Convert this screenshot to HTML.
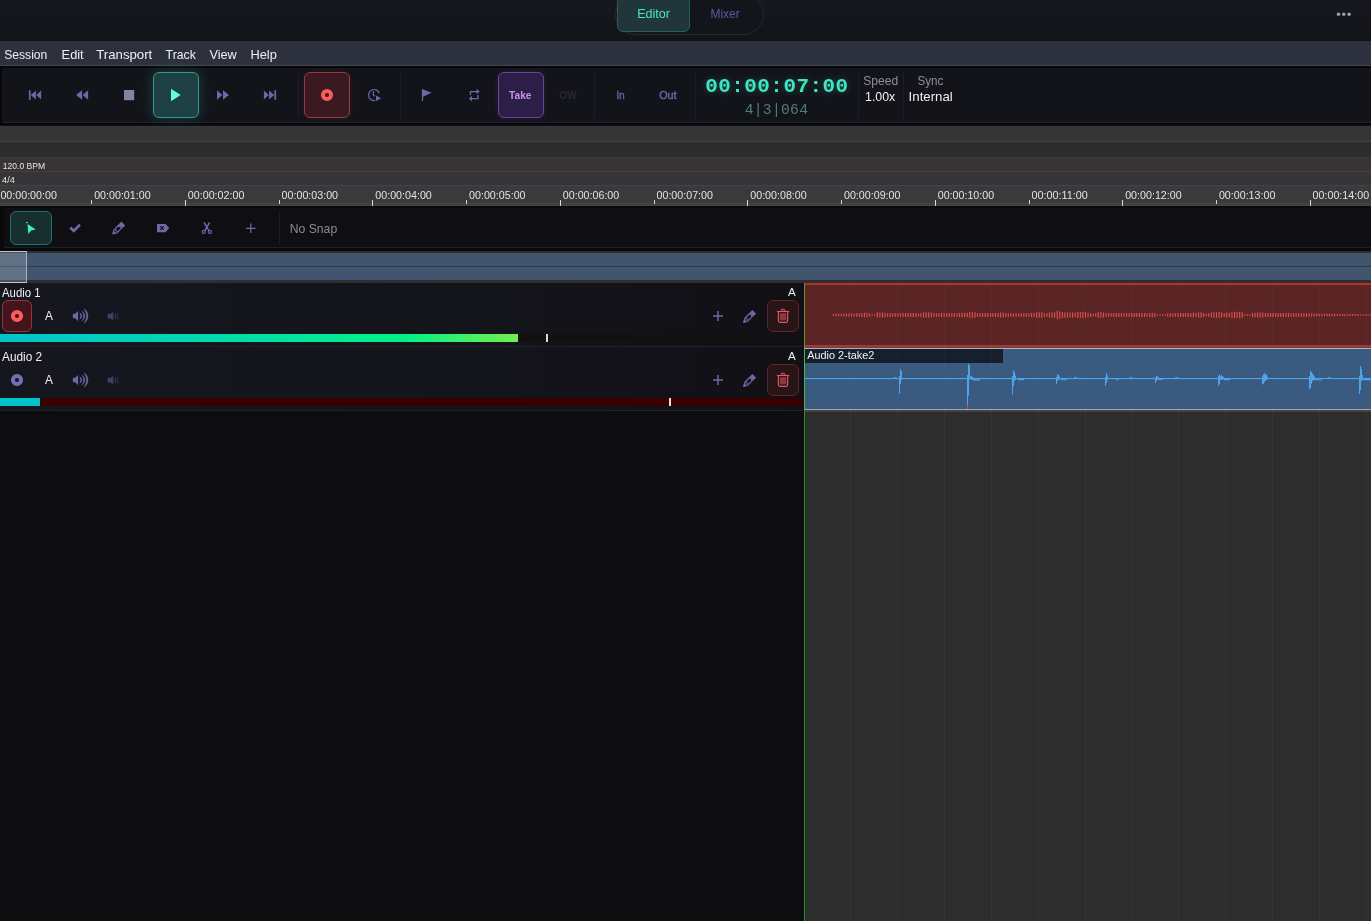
<!DOCTYPE html>
<html><head><meta charset="utf-8">
<style>
*{box-sizing:border-box;margin:0;padding:0}
html,body{width:1371px;height:921px;overflow:hidden;background:#0d0d0f;font-family:"Liberation Sans",sans-serif;}
#root{position:absolute;left:0;top:0;width:1371px;height:921px;will-change:transform;opacity:.999}
.a{position:absolute}
.tb{position:absolute;top:72px;width:46px;height:46px;border-radius:6px}
.sep{position:absolute;top:72px;width:1px;height:46px;background:#1d1e29}
svg{position:absolute;left:0;top:0;overflow:visible}
text{white-space:pre}
</style></head><body><div id="root">

<div class="a" style="left:0px;top:0px;width:1371px;height:41px;background:linear-gradient(#181920,#14151a);"></div>
<div class="a" style="left:615px;top:-6px;width:149px;height:41px;background:#15161b;border-radius:21px;border:1px solid #292a32"></div>
<div class="a" style="left:617px;top:-4px;width:73px;height:36px;background:#22373b;border-radius:6px;border:1px solid #24615c"></div>
<div class="a" style="left:0px;top:40px;width:1371px;height:1px;background:#111217;"></div>
<div class="a" style="left:0px;top:41px;width:1371px;height:24px;background:#2e323e;"></div>
<div class="a" style="left:0px;top:65px;width:1371px;height:1px;background:#464a57;"></div>
<div class="a" style="left:0px;top:66px;width:1371px;height:59px;background:#08080a;"></div>
<div class="a" style="left:2px;top:68px;width:1369px;height:55px;background:#14151b;border-bottom:1px solid #232433"></div>
<div class="tb" style="left:153px;background:#1f4044;border:1px solid #2a9d8c;box-shadow:0 0 14px rgba(60,220,190,.22)"></div>
<div class="tb" style="left:304px;background:#3b1b22;border:1px solid #9a3b42;box-shadow:0 0 6px rgba(200,60,60,.12)"></div>
<div class="tb" style="left:498px;background:#2c2048;border:1px solid #6d469c;box-shadow:0 0 6px rgba(140,90,220,.15)"></div>
<div class="sep" style="left:298px"></div>
<div class="sep" style="left:400px"></div>
<div class="sep" style="left:594px"></div>
<div class="sep" style="left:695px"></div>
<div class="sep" style="left:858px"></div>
<div class="sep" style="left:903px"></div>
<div class="a" style="left:0px;top:125px;width:1371px;height:1px;background:#121220;"></div>
<div class="a" style="left:0px;top:126px;width:1371px;height:15px;background:#363636;"></div>
<div class="a" style="left:0px;top:141px;width:1371px;height:1px;background:#414141;"></div>
<div class="a" style="left:0px;top:142px;width:1371px;height:15px;background:#2d2d2d;"></div>
<div class="a" style="left:0px;top:157px;width:1371px;height:1px;background:#3f3f3f;"></div>
<div class="a" style="left:0px;top:158px;width:1371px;height:13px;background:#393534;"></div>
<div class="a" style="left:0px;top:171px;width:1371px;height:1px;background:#434240;"></div>
<div class="a" style="left:0px;top:172px;width:1371px;height:13px;background:#35353a;"></div>
<div class="a" style="left:0px;top:185px;width:1371px;height:1px;background:#444446;"></div>
<div class="a" style="left:0px;top:186px;width:1371px;height:17px;background:#3b3b3b;"></div>
<div class="a" style="left:0px;top:203px;width:1371px;height:3px;background:#434343;"></div>
<div class="a" style="left:-2px;top:200px;width:1px;height:6px;background:#dcdcdc;"></div>
<div class="a" style="left:91px;top:200px;width:1px;height:4px;background:#d4d4d4;"></div>
<div class="a" style="left:185px;top:200px;width:1px;height:6px;background:#dcdcdc;"></div>
<div class="a" style="left:279px;top:200px;width:1px;height:4px;background:#d4d4d4;"></div>
<div class="a" style="left:372px;top:200px;width:1px;height:6px;background:#dcdcdc;"></div>
<div class="a" style="left:466px;top:200px;width:1px;height:4px;background:#d4d4d4;"></div>
<div class="a" style="left:560px;top:200px;width:1px;height:6px;background:#dcdcdc;"></div>
<div class="a" style="left:654px;top:200px;width:1px;height:4px;background:#d4d4d4;"></div>
<div class="a" style="left:747px;top:200px;width:1px;height:6px;background:#dcdcdc;"></div>
<div class="a" style="left:841px;top:200px;width:1px;height:4px;background:#d4d4d4;"></div>
<div class="a" style="left:935px;top:200px;width:1px;height:6px;background:#dcdcdc;"></div>
<div class="a" style="left:1029px;top:200px;width:1px;height:4px;background:#d4d4d4;"></div>
<div class="a" style="left:1122px;top:200px;width:1px;height:6px;background:#dcdcdc;"></div>
<div class="a" style="left:1216px;top:200px;width:1px;height:4px;background:#d4d4d4;"></div>
<div class="a" style="left:1310px;top:200px;width:1px;height:6px;background:#dcdcdc;"></div>
<div class="a" style="left:0px;top:206px;width:1371px;height:45px;background:#0b0b0d;"></div>
<div class="a" style="left:4px;top:208px;width:1367px;height:40px;background:#101014;border-bottom:1px solid #1e1e2e"></div>
<div class="a" style="left:10px;top:211px;width:42px;height:34px;background:#18302f;border-radius:6px;border:1px solid #1f7569"></div>
<div class="a" style="left:279px;top:211px;width:1px;height:34px;background:#1b1b25;"></div>
<div class="a" style="left:0px;top:251px;width:1371px;height:32px;background:#303030;"></div>
<div class="a" style="left:0px;top:253px;width:1371px;height:27px;background:#42576f;"></div>
<div class="a" style="left:0px;top:266px;width:1371px;height:1px;background:#353a3e;"></div>
<div class="a" style="left:-1px;top:251px;width:28px;height:32px;background:rgba(255,255,255,.17);border:1px solid #c6c6c6;border-right-color:rgba(200,212,224,.65)"></div>
<div class="a" style="left:0px;top:283px;width:804px;height:128px;background:linear-gradient(90deg,#171720,#15151c 60%,#111116);"></div>
<div class="a" style="left:0px;top:346px;width:804px;height:1px;background:#22222c;"></div>
<div class="a" style="left:0px;top:410px;width:804px;height:1px;background:#22222c;"></div>
<div class="a" style="left:2px;top:300px;width:30px;height:32px;background:#43161d;border-radius:6px;border:1px solid #98343b"></div>
<div class="a" style="left:767px;top:300px;width:32px;height:32px;background:#2a1519;border-radius:6px;border:1px solid #56272d"></div>
<div class="a" style="left:767px;top:364px;width:32px;height:32px;background:#2a1519;border-radius:6px;border:1px solid #56272d"></div>
<div class="a" style="left:0px;top:334px;width:804px;height:8px;background:#121213;"></div>
<div class="a" style="left:0px;top:334px;width:518px;height:8px;background:linear-gradient(90deg,#00c4cc 0,#00d4b8 30%,#00e89c 60%,#00f288 78%,#52f060 93%,#74ee4c 100%);"></div>
<div class="a" style="left:546px;top:334px;width:2px;height:8px;background:#d8d8d8;"></div>
<div class="a" style="left:0px;top:398px;width:804px;height:8px;background:#390001;"></div>
<div class="a" style="left:0px;top:398px;width:40px;height:8px;background:#00c4cc;"></div>
<div class="a" style="left:669px;top:398px;width:2px;height:8px;background:#e8dede;"></div>
<div class="a" style="left:804px;top:283px;width:567px;height:638px;background:#2e2e2e;"></div>
<div class="a" style="left:805px;top:283px;width:566px;height:64px;background:#5c2626;border-top:2px solid #b53232;border-bottom:2px solid #b53232"></div>
<div class="a" style="left:805px;top:347px;width:566px;height:65px;background:#3b5b80;border-top:1px solid #4e4e4e;border-bottom:2px solid #444"></div>
<div class="a" style="left:805px;top:348px;width:566px;height:1px;background:#b2b2b2;"></div>
<div class="a" style="left:805px;top:409px;width:566px;height:1px;background:#a8a8a8;"></div>
<div class="a" style="left:805px;top:349px;width:198px;height:14px;background:#17212e;"></div>
<div class="a" style="left:850px;top:283px;width:1px;height:128px;background:rgba(255,255,255,.024);"></div>
<div class="a" style="left:850px;top:411px;width:1px;height:510px;background:rgba(255,255,255,.038);"></div>
<div class="a" style="left:897px;top:283px;width:1px;height:128px;background:rgba(255,255,255,.024);"></div>
<div class="a" style="left:897px;top:411px;width:1px;height:510px;background:rgba(255,255,255,.038);"></div>
<div class="a" style="left:944px;top:283px;width:1px;height:128px;background:rgba(255,255,255,.024);"></div>
<div class="a" style="left:944px;top:411px;width:1px;height:510px;background:rgba(255,255,255,.038);"></div>
<div class="a" style="left:991px;top:283px;width:1px;height:128px;background:rgba(255,255,255,.024);"></div>
<div class="a" style="left:991px;top:411px;width:1px;height:510px;background:rgba(255,255,255,.038);"></div>
<div class="a" style="left:1038px;top:283px;width:1px;height:128px;background:rgba(255,255,255,.024);"></div>
<div class="a" style="left:1038px;top:411px;width:1px;height:510px;background:rgba(255,255,255,.038);"></div>
<div class="a" style="left:1085px;top:283px;width:1px;height:128px;background:rgba(255,255,255,.024);"></div>
<div class="a" style="left:1085px;top:411px;width:1px;height:510px;background:rgba(255,255,255,.038);"></div>
<div class="a" style="left:1131px;top:283px;width:1px;height:128px;background:rgba(255,255,255,.024);"></div>
<div class="a" style="left:1131px;top:411px;width:1px;height:510px;background:rgba(255,255,255,.038);"></div>
<div class="a" style="left:1178px;top:283px;width:1px;height:128px;background:rgba(255,255,255,.024);"></div>
<div class="a" style="left:1178px;top:411px;width:1px;height:510px;background:rgba(255,255,255,.038);"></div>
<div class="a" style="left:1225px;top:283px;width:1px;height:128px;background:rgba(255,255,255,.024);"></div>
<div class="a" style="left:1225px;top:411px;width:1px;height:510px;background:rgba(255,255,255,.038);"></div>
<div class="a" style="left:1272px;top:283px;width:1px;height:128px;background:rgba(255,255,255,.024);"></div>
<div class="a" style="left:1272px;top:411px;width:1px;height:510px;background:rgba(255,255,255,.038);"></div>
<div class="a" style="left:1319px;top:283px;width:1px;height:128px;background:rgba(255,255,255,.024);"></div>
<div class="a" style="left:1319px;top:411px;width:1px;height:510px;background:rgba(255,255,255,.038);"></div>
<div class="a" style="left:1366px;top:283px;width:1px;height:128px;background:rgba(255,255,255,.024);"></div>
<div class="a" style="left:1366px;top:411px;width:1px;height:510px;background:rgba(255,255,255,.038);"></div>
<svg width="1371" height="921" fill="#6d69aa"><g fill="#9e9db7"><circle cx="1338.5" cy="14.2" r="1.75"/><circle cx="1343.8" cy="14.2" r="1.75"/><circle cx="1349.1" cy="14.2" r="1.75"/></g><rect x="28.9" y="90.2" width="1.7" height="9.6"/><path d="M30.8 95L35.9 90.6V99.4ZM36.2 95L41.1 90.5V99.5Z"/><path d="M76.1 95L82.1 90.2V99.8ZM82.7 95L88.1 90.2V99.8Z"/><rect x="124" y="90" width="10.2" height="10.2" fill="#8583a1"/><path d="M171 88.7L180.7 95L171 101.2Z" fill="#62fbe6"/><path d="M217 90.2V99.8L222.4 95ZM223 90.2V99.8L229 95Z"/><rect x="274.4" y="90.2" width="1.7" height="9.6"/><path d="M274.2 95L269.1 90.6V99.4ZM268.8 95L263.9 90.5V99.5Z"/><circle cx="327" cy="95" r="4.1" fill="none" stroke="#ff5c5c" stroke-width="4"/><path d="M379.3 93.3A5.5 5.5 0 1 0 375.2 100.4" fill="none" stroke="#6d69aa" stroke-width="1.2"/><path d="M373.4 91V95.8H375.2" fill="none" stroke="#6d69aa" stroke-width="1.1"/><path d="M376 95.4L381.2 98.2L376 101Z"/><rect x="421.9" y="89" width="1.2" height="12"/><path d="M422 89L431.5 92.8L422.6 97Z"/><path d="M470.5 95V91.6H477" fill="none" stroke="#6d69aa" stroke-width="1.3"/><path d="M476.6 88.8L479.6 91.6L476.6 94.4Z"/><path d="M478 95V98.6H471.5" fill="none" stroke="#6d69aa" stroke-width="1.3"/><path d="M471.9 95.8L468.9 98.6L471.9 101.4Z"/><path d="M27.5 224L35.8 229.6L31.2 230.4L28.3 234Z" fill="#3df0cc"/><rect x="26" y="222" width="1.6" height="1.2" fill="#3df0cc"/><path d="M70.3 227.5L73.7 230.9L80 224.7" fill="none" stroke="#6d69aa" stroke-width="2.7"/><g transform="translate(112.9,233.9) rotate(-45)"><path d="M0.7 0L3.6 -2.05H10.2V2.05H3.6Z" fill="none" stroke="#6d69aa" stroke-width="1.2" stroke-linejoin="round"/><path d="M0 0L2 -1.3V1.3ZM4.6 -2V2" stroke="#6d69aa" stroke-width="1.1"/><rect x="10.6" y="-2.7" width="4.1" height="5.4"/></g><path d="M157 224H165.6L169.2 228L165.6 232.2H157Z"/><path d="M160.2 226.2L163.8 229.8M163.8 226.2L160.2 229.8" stroke="#0f0f12" stroke-width="1.1"/><g fill="none" stroke="#6d69aa" stroke-width="1.2"><circle cx="203.8" cy="231.9" r="1.55"/><circle cx="209.9" cy="231.9" r="1.55"/><path d="M204.8 230.6L209.7 222.4M208.9 230.6L204 222.4" stroke-width="1.5"/></g><path d="M250.8 223.5V233.1M246 228.3H255.6" stroke="#6d69aa" stroke-width="1.25" fill="none"/><circle cx="17" cy="316" r="4.1" fill="none" stroke="#ff5c5c" stroke-width="4"/><g transform="translate(0,0)"><path d="M72.9 313.7H75.2L78.1 310.9V321.2L75.2 318.2H72.9Z"/><path d="M79.8 312.8A3.5 3.5 0 0 1 79.8 319.2A7.2 7.2 0 0 0 79.8 312.8ZM81.85 310.9A5.9 5.9 0 0 1 81.85 321.2A9.3 9.3 0 0 0 81.85 310.9ZM83.8 308.7A8.2 8.2 0 0 1 83.8 323.1A10.95 10.95 0 0 0 83.8 308.7Z" stroke="#6d69aa" stroke-width=".25"/><path d="M107.7 313.7H110.4L113.3 312V320.2L110.4 318.4H107.7Z" fill="#434062"/><rect x="114.9" y="313.7" width="1.1" height="5.1" fill="#3b395a"/><rect x="117.1" y="312.8" width="1.1" height="7" fill="#2e2d47"/></g><path d="M718 311V321M713 316H723" stroke="#6d69aa" stroke-width="1.5" fill="none"/><g transform="translate(743.8,322.2) rotate(-45)"><path d="M0.7 0L3.6 -2.05H10.2V2.05H3.6Z" fill="none" stroke="#6d69aa" stroke-width="1.2" stroke-linejoin="round"/><path d="M0 0L2 -1.3V1.3ZM4.6 -2V2" stroke="#6d69aa" stroke-width="1.1"/><rect x="10.6" y="-2.7" width="4.1" height="5.4"/></g><g transform="translate(0,0)" fill="none" stroke="#d9605f" stroke-width="1.15"><rect x="781.4" y="309.4" width="3.4" height="2" rx=".6" stroke-width="1"/><path d="M776.9 311.5H789.1"/><path d="M778.4 312V320.5Q778.4 322.4 780.3 322.4H785.8Q787.7 322.4 787.7 320.5V312"/><rect x="779.9" y="313.2" width="6.4" height="7.1" fill="#8a3a40" stroke="none"/></g><circle cx="17" cy="380" r="4.1" fill="none" stroke="#7572b4" stroke-width="4"/><g transform="translate(0,64)"><path d="M72.9 313.7H75.2L78.1 310.9V321.2L75.2 318.2H72.9Z"/><path d="M79.8 312.8A3.5 3.5 0 0 1 79.8 319.2A7.2 7.2 0 0 0 79.8 312.8ZM81.85 310.9A5.9 5.9 0 0 1 81.85 321.2A9.3 9.3 0 0 0 81.85 310.9ZM83.8 308.7A8.2 8.2 0 0 1 83.8 323.1A10.95 10.95 0 0 0 83.8 308.7Z" stroke="#6d69aa" stroke-width=".25"/><path d="M107.7 313.7H110.4L113.3 312V320.2L110.4 318.4H107.7Z" fill="#434062"/><rect x="114.9" y="313.7" width="1.1" height="5.1" fill="#3b395a"/><rect x="117.1" y="312.8" width="1.1" height="7" fill="#2e2d47"/></g><path d="M718 375V385M713 380H723" stroke="#6d69aa" stroke-width="1.5" fill="none"/><g transform="translate(743.8,386.2) rotate(-45)"><path d="M0.7 0L3.6 -2.05H10.2V2.05H3.6Z" fill="none" stroke="#6d69aa" stroke-width="1.2" stroke-linejoin="round"/><path d="M0 0L2 -1.3V1.3ZM4.6 -2V2" stroke="#6d69aa" stroke-width="1.1"/><rect x="10.6" y="-2.7" width="4.1" height="5.4"/></g><g transform="translate(0,64)" fill="none" stroke="#d9605f" stroke-width="1.15"><rect x="781.4" y="309.4" width="3.4" height="2" rx=".6" stroke-width="1"/><path d="M776.9 311.5H789.1"/><path d="M778.4 312V320.5Q778.4 322.4 780.3 322.4H785.8Q787.7 322.4 787.7 320.5V312"/><rect x="779.9" y="313.2" width="6.4" height="7.1" fill="#8a3a40" stroke="none"/></g></svg><svg width="1371" height="921"><path d="M807.9 314.6v.8M810.5 314.6v.8M813.0 314.6v.8M815.6 314.6v.8M818.2 314.6v.8M820.8 314.6v.8M823.3 314.6v.8M825.9 314.6v.8M828.5 314.6v.8M831.0 314.6v.8" stroke="#c04a4a" stroke-opacity=".22" stroke-width="1.1" fill="none"/><path d="M833.60 314.03v1.94M836.17 313.82v2.37M838.74 313.67v2.66M841.31 313.75v2.51M843.88 313.60v2.80M846.45 313.59v2.81M849.02 313.62v2.76M851.59 313.43v3.13M854.16 313.46v3.09M856.73 313.25v3.50M859.30 313.26v3.49M861.87 313.11v3.78M864.44 312.83v4.34M867.01 312.77v4.45M869.58 313.61v2.77M872.15 314.24v1.53M874.72 314.18v1.63M877.29 312.32v5.36M879.86 312.47v5.06M882.43 312.54v4.92M885.00 312.69v4.63M887.57 313.33v3.34M890.14 313.10v3.81M892.71 313.26v3.48M895.28 313.30v3.40M897.85 313.31v3.38M900.42 313.23v3.54M902.99 312.92v4.16M905.56 313.01v3.97M908.13 312.90v4.19M910.70 312.91v4.18M913.27 313.02v3.95M915.84 313.07v3.86M918.41 313.42v3.16M920.98 312.96v4.07M923.55 312.43v5.15M926.12 312.22v5.56M928.69 312.33v5.34M931.26 312.49v5.01M933.83 313.18v3.65M936.40 313.21v3.57M938.97 313.26v3.48M941.54 313.12v3.77M944.11 313.14v3.71M946.68 313.27v3.45M949.25 313.18v3.64M951.82 313.19v3.61M954.39 313.09v3.82M956.96 313.13v3.73M959.53 313.11v3.77M962.10 312.63v4.74M964.67 312.93v4.13M967.24 312.65v4.71M969.81 312.11v5.77M972.38 312.36v5.29M974.95 312.20v5.59M977.52 313.24v3.52M980.09 313.05v3.90M982.66 313.02v3.96M985.23 313.08v3.84M987.80 312.99v4.03M990.37 313.16v3.69M992.94 313.04v3.92M995.51 313.07v3.86M998.08 313.05v3.90M1000.65 312.52v4.96M1003.22 312.45v5.11M1005.79 313.09v3.82M1008.36 313.27v3.45M1010.93 313.27v3.45M1013.50 313.48v3.03M1016.07 313.37v3.26M1018.64 313.44v3.13M1021.21 313.33v3.34M1023.78 313.27v3.46M1026.35 313.32v3.37M1028.92 313.19v3.62M1031.49 313.01v3.99M1034.06 312.96v4.09M1036.63 312.29v5.42M1039.20 312.35v5.30M1041.77 312.37v5.26M1044.34 313.31v3.38M1046.91 313.16v3.69M1049.48 312.47v5.06M1052.05 312.32v5.36M1054.62 312.16v5.67M1057.19 310.76v8.48M1059.76 311.27v7.46M1062.33 312.03v5.93M1064.90 312.34v5.32M1067.47 312.29v5.41M1070.04 312.41v5.18M1072.61 312.48v5.04M1075.18 312.72v4.56M1077.75 312.04v5.92M1080.32 312.07v5.86M1082.89 311.82v6.37M1085.46 311.90v6.19M1088.03 312.70v4.59M1090.60 313.24v3.53M1093.17 313.85v2.30M1095.74 313.32v3.36M1098.31 312.31v5.39M1100.88 312.26v5.48M1103.45 312.40v5.20M1106.02 313.25v3.50M1108.59 313.14v3.73M1111.16 313.16v3.68M1113.73 313.11v3.78M1116.30 313.01v3.98M1118.87 313.10v3.81M1121.44 313.16v3.68M1124.01 313.14v3.72M1126.58 313.13v3.73M1129.15 313.33v3.35M1131.72 313.07v3.87M1134.29 313.07v3.85M1136.86 313.02v3.96M1139.43 313.02v3.97M1142.00 313.11v3.77M1144.57 313.09v3.83M1147.14 313.15v3.69M1149.71 312.96v4.08M1152.28 312.86v4.28M1154.85 312.86v4.28M1157.42 314.33v1.33M1159.99 314.34v1.32M1162.56 314.32v1.36M1165.13 314.29v1.42M1167.70 313.43v3.15M1170.27 313.34v3.31M1172.84 313.32v3.37M1175.41 313.20v3.60M1177.98 313.26v3.48M1180.55 312.96v4.08M1183.12 313.00v4.01M1185.69 313.10v3.81M1188.26 313.01v3.99M1190.83 312.92v4.16M1193.40 312.85v4.29M1195.97 312.88v4.23M1198.54 312.49v5.03M1201.11 312.19v5.61M1203.68 313.05v3.91M1206.25 313.80v2.39M1208.82 313.27v3.47M1211.39 312.38v5.24M1213.96 312.27v5.46M1216.53 312.31v5.39M1219.10 312.05v5.89M1221.67 312.54v4.92M1224.24 312.95v4.10M1226.81 312.58v4.83M1229.38 312.70v4.60M1231.95 312.06v5.89M1234.52 311.74v6.52M1237.09 311.90v6.21M1239.66 311.75v6.50M1242.23 312.06v5.89M1244.80 314.26v1.48M1247.37 314.28v1.44M1249.94 314.33v1.35M1252.51 312.84v4.32M1255.08 312.63v4.73M1257.65 312.39v5.22M1260.22 312.49v5.03M1262.79 312.59v4.81M1265.36 313.06v3.88M1267.93 313.10v3.79M1270.50 312.93v4.15M1273.07 312.88v4.24M1275.64 312.93v4.13M1278.21 312.96v4.08M1280.78 312.97v4.07M1283.35 313.00v4.00M1285.92 313.17v3.66M1288.49 313.09v3.82M1291.06 313.15v3.69M1293.63 313.28v3.45M1296.20 313.30v3.40M1298.77 313.25v3.50M1301.34 313.28v3.44M1303.91 313.18v3.63M1306.48 313.14v3.72M1309.05 313.30v3.39M1311.62 313.44v3.12M1314.19 313.55v2.90M1316.76 313.61v2.78M1319.33 313.75v2.50M1321.90 313.80v2.40M1324.47 313.81v2.37M1327.04 313.84v2.32M1329.61 313.85v2.29M1332.18 313.83v2.34M1334.75 313.85v2.30M1337.32 313.93v2.14M1339.89 314.05v1.90M1342.46 314.04v1.92M1345.03 314.03v1.94M1347.60 314.15v1.71M1350.17 314.08v1.85M1352.74 314.05v1.89M1355.31 314.08v1.83M1357.88 314.10v1.80M1360.45 314.15v1.70M1363.02 314.20v1.59M1365.59 314.14v1.73M1368.16 314.21v1.58M1370.73 314.16v1.68" stroke="#ec5252" stroke-opacity=".92" stroke-width="1.15" fill="none"/><rect x="805" y="378" width="566" height="1.1" fill="#4aa6f0"/><path d="M899.5 376.0V393.7M900.5 369.0V384.0M901.5 371.0V380.0M967.5 375.0V405.4M968.5 363.5V395.6M969.5 365.3V379.5M970.5 376.4V379.3M971.5 375.8V379.3M972.5 377.0V380.0M1012.5 376.0V394.3M1013.5 370.2V386.0M1014.5 372.0V381.0M1015.5 375.5V380.0M1056.5 377.0V384.0M1057.5 374.2V381.0M1058.5 375.0V379.5M1059.5 376.6V379.5M1105.5 377.0V386.0M1106.5 373.2V383.0M1107.5 375.6V380.0M1155.5 377.5V383.0M1156.5 376.0V381.0M1157.5 376.4V379.4M1158.5 377.0V379.4M1218.5 376.0V386.0M1219.5 374.3V384.0M1220.5 376.2V380.0M1221.5 375.0V380.0M1222.5 376.0V379.5M1223.5 377.0V379.6M1262.5 376.5V384.6M1263.5 374.0V384.0M1264.5 372.7V382.0M1265.5 375.0V381.0M1266.5 374.0V380.0M1267.5 376.5V379.6M1309.5 376.0V389.6M1310.5 370.5V388.0M1311.5 372.0V384.0M1312.5 373.5V381.0M1313.5 375.0V380.0M1314.5 376.6V380.0M1359.5 376.0V394.0M1360.5 366.0V390.0M1361.5 369.0V381.0M1362.5 375.0V380.0" stroke="#4aa6f0" stroke-width="1.05" fill="none"/><path d="M973.0 379.9H980.0M1018.0 379.6H1024.0M1061.0 379.7H1067.0M1159.0 379.5H1162.5M1224.0 379.6H1230.0M1315.0 379.8H1322.0M1363.0 379.6H1371.0" stroke="#4aa6f0" stroke-width="1.1" fill="none"/><path d="M1074.3 377.6h2.4M1116.0 379.6h2.4M1129.8 377.7h2.4M1175.3 377.6h2.4M1327.8 377.7h2.4M893.8 377.8h2.4" stroke="#4aa6f0" stroke-width="1" fill="none"/><rect x="967" y="405.2" width="1.1" height="3.8" fill="#f04040"/><path d="M899.0 378.5h3M967.0 378.5h3M1012.5 378.5h3M1056.0 378.5h3M1105.5 378.5h3M1155.0 378.5h3M1218.5 378.5h3M1262.5 378.5h3M1309.5 378.5h3M1359.5 378.5h3" stroke="#a08868" stroke-width=".8" fill="none"/></svg><svg width="1371" height="921"><text x="637.20" y="18.40" font-family="Liberation Sans" font-size="13.48" fill="#4fe6c8" textLength="32.83" lengthAdjust="spacingAndGlyphs">Editor</text><text x="710.40" y="18.40" font-family="Liberation Sans" font-size="13.48" fill="#5b5aa6" textLength="29.39" lengthAdjust="spacingAndGlyphs">Mixer</text><text x="4.20" y="59.00" font-family="Liberation Sans" font-size="13.19" fill="#f0f0f3" textLength="43.17" lengthAdjust="spacingAndGlyphs">Session</text><text x="61.60" y="59.00" font-family="Liberation Sans" font-size="13.19" fill="#f0f0f3" textLength="22.08" lengthAdjust="spacingAndGlyphs">Edit</text><text x="96.30" y="59.00" font-family="Liberation Sans" font-size="13.19" fill="#f0f0f3" textLength="55.93" lengthAdjust="spacingAndGlyphs">Transport</text><text x="165.60" y="59.00" font-family="Liberation Sans" font-size="13.19" fill="#f0f0f3" textLength="30.21" lengthAdjust="spacingAndGlyphs">Track</text><text x="209.40" y="59.00" font-family="Liberation Sans" font-size="13.19" fill="#f0f0f3" textLength="27.39" lengthAdjust="spacingAndGlyphs">View</text><text x="250.50" y="59.00" font-family="Liberation Sans" font-size="13.19" fill="#f0f0f3" textLength="26.32" lengthAdjust="spacingAndGlyphs">Help</text><text x="509.10" y="98.95" font-family="Liberation Sans" font-size="10.29" font-weight="bold" fill="#cb92ea" textLength="22.30" lengthAdjust="spacingAndGlyphs">Take</text><text x="559.20" y="98.95" font-family="Liberation Sans" font-size="10.29" font-weight="bold" fill="#292836" textLength="17.47" lengthAdjust="spacingAndGlyphs">OW</text><text x="616.60" y="98.95" font-family="Liberation Sans" font-size="10.29" fill="#6d69aa" textLength="8.09" lengthAdjust="spacingAndGlyphs" stroke="#6d69aa" stroke-width=".35">In</text><text x="659.20" y="98.95" font-family="Liberation Sans" font-size="10.29" fill="#6d69aa" textLength="17.42" lengthAdjust="spacingAndGlyphs" stroke="#6d69aa" stroke-width=".35">Out</text><text x="705.25" y="92.10" font-family="Liberation Mono" font-size="20.91" font-weight="bold" fill="#3fe8c5" textLength="142.77" lengthAdjust="spacing" style="filter:drop-shadow(0 0 3px rgba(63,232,197,.28))">00:00:07:00</text><text x="744.70" y="114.10" font-family="Liberation Mono" font-size="14.70" fill="#4f7f76" textLength="63.31" lengthAdjust="spacing">4|3|064</text><text x="863.30" y="85.00" font-family="Liberation Sans" font-size="13.19" fill="#8f8f9c" textLength="35.02" lengthAdjust="spacingAndGlyphs">Speed</text><text x="865.00" y="100.90" font-family="Liberation Sans" font-size="13.04" fill="#f0f0f3" textLength="30.32" lengthAdjust="spacingAndGlyphs">1.00x</text><text x="917.40" y="85.00" font-family="Liberation Sans" font-size="13.19" fill="#8f8f9c" textLength="25.88" lengthAdjust="spacingAndGlyphs">Sync</text><text x="908.60" y="100.90" font-family="Liberation Sans" font-size="13.04" fill="#f0f0f3" textLength="44.21" lengthAdjust="spacingAndGlyphs">Internal</text><text x="2.80" y="169.10" font-family="Liberation Sans" font-size="9.86" fill="#e4e4e4" textLength="42.32" lengthAdjust="spacingAndGlyphs">120.0 BPM</text><text x="2.00" y="182.90" font-family="Liberation Sans" font-size="9.57" fill="#e4e4e4" textLength="12.85" lengthAdjust="spacingAndGlyphs">4/4</text><text x="0.40" y="198.90" font-family="Liberation Sans" font-size="11.30" fill="#e4e4e4" textLength="56.48" lengthAdjust="spacingAndGlyphs">00:00:00:00</text><text x="94.13" y="198.90" font-family="Liberation Sans" font-size="11.30" fill="#e4e4e4" textLength="56.48" lengthAdjust="spacingAndGlyphs">00:00:01:00</text><text x="187.86" y="198.90" font-family="Liberation Sans" font-size="11.30" fill="#e4e4e4" textLength="56.48" lengthAdjust="spacingAndGlyphs">00:00:02:00</text><text x="281.59" y="198.90" font-family="Liberation Sans" font-size="11.30" fill="#e4e4e4" textLength="56.48" lengthAdjust="spacingAndGlyphs">00:00:03:00</text><text x="375.32" y="198.90" font-family="Liberation Sans" font-size="11.30" fill="#e4e4e4" textLength="56.48" lengthAdjust="spacingAndGlyphs">00:00:04:00</text><text x="469.05" y="198.90" font-family="Liberation Sans" font-size="11.30" fill="#e4e4e4" textLength="56.48" lengthAdjust="spacingAndGlyphs">00:00:05:00</text><text x="562.78" y="198.90" font-family="Liberation Sans" font-size="11.30" fill="#e4e4e4" textLength="56.48" lengthAdjust="spacingAndGlyphs">00:00:06:00</text><text x="656.51" y="198.90" font-family="Liberation Sans" font-size="11.30" fill="#e4e4e4" textLength="56.48" lengthAdjust="spacingAndGlyphs">00:00:07:00</text><text x="750.24" y="198.90" font-family="Liberation Sans" font-size="11.30" fill="#e4e4e4" textLength="56.48" lengthAdjust="spacingAndGlyphs">00:00:08:00</text><text x="843.97" y="198.90" font-family="Liberation Sans" font-size="11.30" fill="#e4e4e4" textLength="56.48" lengthAdjust="spacingAndGlyphs">00:00:09:00</text><text x="937.70" y="198.90" font-family="Liberation Sans" font-size="11.30" fill="#e4e4e4" textLength="56.48" lengthAdjust="spacingAndGlyphs">00:00:10:00</text><text x="1031.43" y="198.90" font-family="Liberation Sans" font-size="11.30" fill="#e4e4e4" textLength="56.48" lengthAdjust="spacingAndGlyphs">00:00:11:00</text><text x="1125.16" y="198.90" font-family="Liberation Sans" font-size="11.30" fill="#e4e4e4" textLength="56.48" lengthAdjust="spacingAndGlyphs">00:00:12:00</text><text x="1218.89" y="198.90" font-family="Liberation Sans" font-size="11.30" fill="#e4e4e4" textLength="56.48" lengthAdjust="spacingAndGlyphs">00:00:13:00</text><text x="1312.62" y="198.90" font-family="Liberation Sans" font-size="11.30" fill="#e4e4e4" textLength="56.48" lengthAdjust="spacingAndGlyphs">00:00:14:00</text><text x="289.70" y="232.90" font-family="Liberation Sans" font-size="13.04" fill="#8c8c96" textLength="47.52" lengthAdjust="spacingAndGlyphs">No Snap</text><text x="2.00" y="297.00" font-family="Liberation Sans" font-size="11.88" fill="#f0f0f3" textLength="38.52" lengthAdjust="spacingAndGlyphs">Audio 1</text><text x="44.90" y="320.10" font-family="Liberation Sans" font-size="13.62" fill="#f0f0f3" textLength="7.96" lengthAdjust="spacingAndGlyphs">A</text><text x="787.90" y="296.40" font-family="Liberation Sans" font-size="11.74" fill="#f0f0f3" textLength="7.67" lengthAdjust="spacingAndGlyphs">A</text><text x="2.00" y="361.00" font-family="Liberation Sans" font-size="11.88" fill="#f0f0f3" textLength="40.12" lengthAdjust="spacingAndGlyphs">Audio 2</text><text x="44.90" y="384.10" font-family="Liberation Sans" font-size="13.62" fill="#f0f0f3" textLength="7.96" lengthAdjust="spacingAndGlyphs">A</text><text x="787.90" y="360.40" font-family="Liberation Sans" font-size="11.74" fill="#f0f0f3" textLength="7.67" lengthAdjust="spacingAndGlyphs">A</text><text x="807.20" y="359.20" font-family="Liberation Sans" font-size="11.59" fill="#f2f2f2" textLength="67.21" lengthAdjust="spacingAndGlyphs">Audio 2-take2</text></svg>
<div class="a" style="left:803px;top:283px;width:1px;height:638px;background:#140c1c;"></div>
<div class="a" style="left:804px;top:283px;width:1px;height:64px;background:#5a9e1c;"></div>
<div class="a" style="left:804px;top:347px;width:1px;height:63px;background:#3cc43e;"></div>
<div class="a" style="left:804px;top:410px;width:1px;height:511px;background:#1a9a1c;"></div>
</div></body></html>
